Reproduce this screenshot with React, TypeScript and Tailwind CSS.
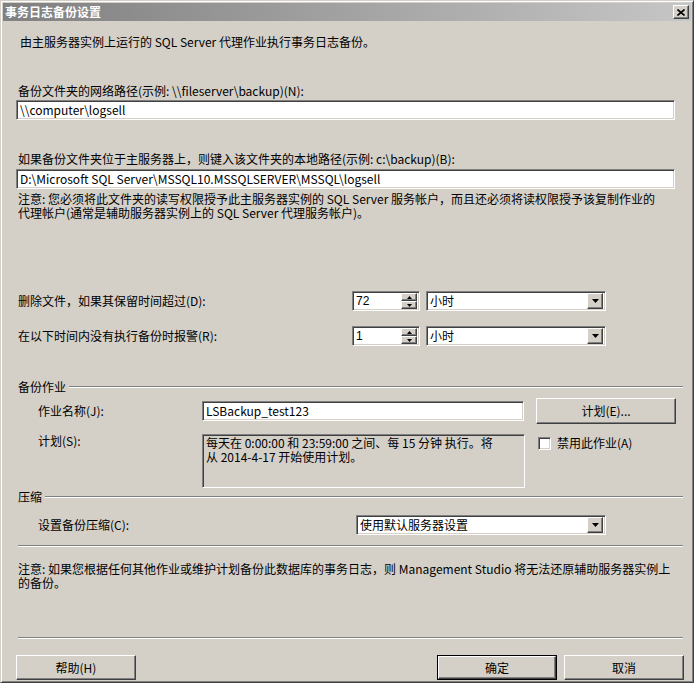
import React from "react";

const sunken =
  "border border-t-[#808080] border-l-[#808080] border-r-white border-b-white shadow-[inset_1px_1px_0_#404040,inset_-1px_-1px_0_#d4d0c8]";
const raised =
  "border border-t-white border-l-white border-r-[#404040] border-b-[#404040] shadow-[inset_-1px_-1px_0_#808080]";

function Etched({ className = "" }: { className?: string }) {
  return <div className={`h-[2px] border-t border-t-[#808080] border-b border-b-white ${className}`} />;
}

function ArrowDown({ w = 7 }: { w?: number }) {
  return (
    <svg width={w} height={4} viewBox="0 0 7 4">
      <path d="M0 0h7L3.5 4z" fill="#000" />
    </svg>
  );
}

function Combo({ value, width }: { value: string; width: string }) {
  return (
    <div className={`${sunken} ${width} h-[20px] bg-white flex items-center p-[2px]`}>
      <span className="flex-1 pl-[1px] leading-[14px]">{value}</span>
      <div className={`${raised} bg-[#d4d0c8] w-[16px] h-[16px] flex items-center justify-center`}>
        <ArrowDown />
      </div>
    </div>
  );
}

function Spin({ value }: { value: string }) {
  return (
    <div className={`${sunken} w-[68px] h-[20px] bg-white flex items-center p-[2px]`}>
      <span className="flex-1 pl-[1px] leading-[14px] font-['Liberation_Sans',sans-serif] text-[12px]">{value}</span>
      <div className="flex flex-col w-[16px] h-[16px]">
        <div className={`${raised} bg-[#d4d0c8] flex-1 flex items-center justify-center`}>
          <svg width="5" height="3" viewBox="0 0 5 3">
            <path d="M2.5 0L5 3H0z" fill="#000" />
          </svg>
        </div>
        <div className={`${raised} bg-[#d4d0c8] flex-1 flex items-center justify-center`}>
          <svg width="5" height="3" viewBox="0 0 5 3">
            <path d="M0 0h5L2.5 3z" fill="#000" />
          </svg>
        </div>
      </div>
    </div>
  );
}

function Button({ label, width, isDefault = false }: { label: string; width: string; isDefault?: boolean }) {
  if (isDefault) {
    return (
      <div className={`${width} h-[25px] border border-black`}>
        <div className={`${raised} w-full h-full flex items-center justify-center`}>{label}</div>
      </div>
    );
  }
  return <div className={`${raised} ${width} h-[25px] flex items-center justify-center`}>{label}</div>;
}

export default function App() {
  return (
    <div className="w-[694px] h-[683px] bg-[#d4d0c8] border border-t-[#d4d0c8] border-l-[#d4d0c8] border-r-[#404040] border-b-[#404040] shadow-[inset_1px_1px_0_white,inset_-1px_-1px_0_#808080] p-[2px] flex flex-col text-[12px] text-black font-['Noto_Sans_CJK_SC',sans-serif] overflow-hidden">
      {/* Title bar */}
      <div className="h-[18px] bg-gradient-to-r from-[#808080] to-[#c6c6c6] flex items-center justify-between pl-[2px] pr-[2px]">
        <span className="text-white font-bold leading-[14px]">事务日志备份设置</span>
        <div className={`${raised} bg-[#d4d0c8] w-[16px] h-[14px] flex items-center justify-center`}>
          <svg width="8" height="7" viewBox="0 0 8 7">
            <path d="M0.5 0.5L7.5 6.5M7.5 0.5L0.5 6.5" stroke="#000" strokeWidth="1.6" />
          </svg>
        </div>
      </div>

      {/* Body */}
      <div className="flex-1 flex flex-col pl-[13px]">
        <div className="mt-[14px] ml-[4px] leading-[14px]">由主服务器实例上运行的 SQL Server 代理作业执行事务日志备份。</div>

        <div className="mt-[35px] ml-[2px] leading-[14px]">备份文件夹的网络路径(示例: \\fileserver\backup)(N):</div>
        <div className={`${sunken} mt-[2px] w-[659px] h-[20px] bg-white flex items-center px-[3px] leading-[14px]`}>
          \\computer\logsell
        </div>

        <div className="mt-[32px] ml-[2px] leading-[14px]">如果备份文件夹位于主服务器上，则键入该文件夹的本地路径(示例: c:\backup)(B):</div>
        <div className={`${sunken} mt-[3px] w-[659px] h-[20px] bg-white flex items-center px-[3px] leading-[14px]`}>
          D:\Microsoft SQL Server\MSSQL10.MSSQLSERVER\MSSQL\logsell
        </div>

        <div className="mt-[3px] ml-[2px] leading-[14px] whitespace-nowrap">
          注意: 您必须将此文件夹的读写权限授予此主服务器实例的 SQL Server 服务帐户，而且还必须将读权限授予该复制作业的
          <br />
          代理帐户(通常是辅助服务器实例上的 SQL Server 代理服务帐户)。
        </div>

        <div className="mt-[71px] h-[20px] flex items-center">
          <div className="w-[336px] pl-[2px] leading-[14px]">删除文件，如果其保留时间超过(D):</div>
          <Spin value="72" />
          <div className="ml-[6px]">
            <Combo value="小时" width="w-[180px]" />
          </div>
        </div>

        <div className="mt-[15px] h-[20px] flex items-center">
          <div className="w-[336px] pl-[2px] leading-[14px]">在以下时间内没有执行备份时报警(R):</div>
          <Spin value="1" />
          <div className="ml-[6px]">
            <Combo value="小时" width="w-[180px]" />
          </div>
        </div>

        {/* Backup job group */}
        <div className="mt-[34px] w-[667px] h-[14px] flex items-center">
          <span className="pl-[2px] leading-[14px]">备份作业</span>
          <Etched className="flex-1 ml-[3px]" />
        </div>

        <div className="mt-[4px] h-[26px] flex items-center">
          <div className="w-[186px] pl-[22px] leading-[14px]">作业名称(J):</div>
          <div className={`${sunken} w-[322px] h-[20px] bg-white flex items-center px-[3px] leading-[14px]`}>LSBackup_test123</div>
          <div className={`${raised} ml-[12px] w-[140px] h-[26px] flex items-center justify-center`}>计划(E)...</div>
        </div>

        <div className="mt-[10px] flex items-start">
          <div className="w-[186px] pl-[22px] leading-[14px]">计划(S):</div>
          <div className={`${sunken} w-[323px] h-[54px] bg-[#d4d0c8] px-[3px] pt-[1px] leading-[14px]`}>
            每天在 0:00:00 和 23:59:00 之间、每 15 分钟 执行。将
            <br />
            从 2014-4-17 开始使用计划。
          </div>
          <div className="ml-[13px] mt-[2px] flex items-center">
            <div className={`${sunken} w-[13px] h-[13px] bg-white`} />
            <span className="ml-[6px] leading-[14px]">禁用此作业(A)</span>
          </div>
        </div>

        {/* Compression group */}
        <div className="mt-[2px] w-[667px] h-[14px] flex items-center">
          <span className="pl-[2px] leading-[14px]">压缩</span>
          <Etched className="flex-1 ml-[3px]" />
        </div>

        <div className="mt-[11px] h-[20px] flex items-center">
          <div className="w-[340px] pl-[22px] leading-[14px]">设置备份压缩(C):</div>
          <Combo value="使用默认服务器设置" width="w-[250px]" />
        </div>

        <Etched className="mt-[10px] ml-[2px] w-[665px]" />

        <div className="mt-[15px] ml-[2px] leading-[14px] whitespace-nowrap">
          注意: 如果您根据任何其他作业或维护计划备份此数据库的事务日志，则 Management Studio 将无法还原辅助服务器实例上
          <br />
          的备份。
        </div>

        <Etched className="mt-[47px] ml-[2px] w-[665px]" />

        <div className="mt-[16px] w-[668px] flex items-center">
          <Button label="帮助(H)" width="w-[120px]" />
          <div className="flex-1" />
          <Button label="确定" width="w-[120px]" isDefault />
          <div className="ml-[7px]">
            <Button label="取消" width="w-[120px]" />
          </div>
        </div>
      </div>
    </div>
  );
}
